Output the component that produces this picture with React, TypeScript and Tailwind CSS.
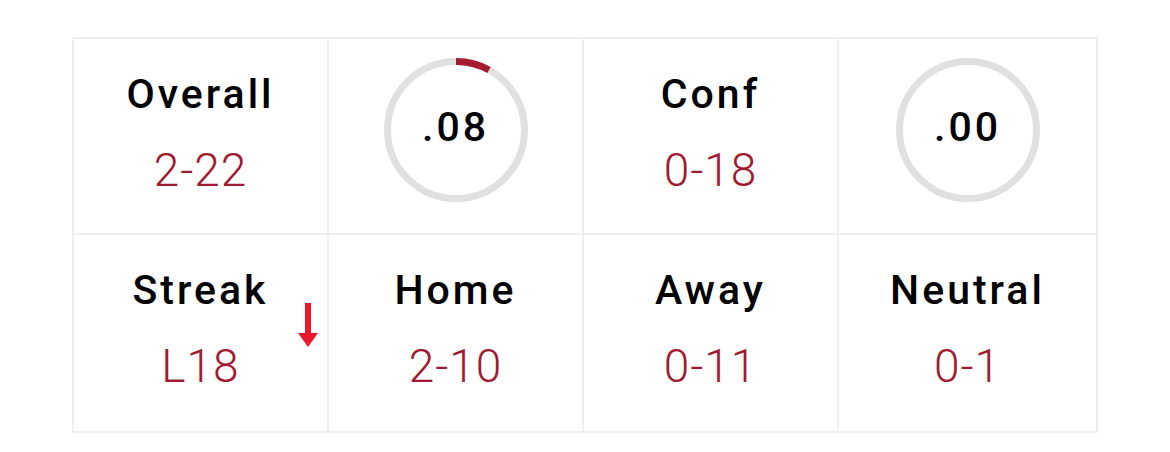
import React from "react";

const FONT = { fontFamily: "Roboto, 'Liberation Sans', sans-serif" };

function Stat({ label, value, arrow, tall }: { label: string; value: string; arrow?: boolean; tall?: boolean }) {
  return (
    <div
      className={`relative flex flex-col items-center gap-[32px] border-b-2 border-r-2 border-[#efefef] pt-[35px] ${
        tall ? "h-[198px]" : "h-[196px]"
      }`}
    >
      <div className="text-[41px] font-medium leading-none tracking-[3px] text-black">{label}</div>
      <div className="text-[46px] font-light leading-none tracking-[1px] text-[#a01a31]">{value}</div>
      {arrow && (
        <svg className="absolute left-[224px] top-[68px]" width="20" height="44" viewBox="0 0 20 44">
          <rect x="7" y="0" width="6" height="32" fill="#e8192c" />
          <polygon points="0,30 20,30 10,44" fill="#e8192c" />
        </svg>
      )}
    </div>
  );
}

function Ring({ value, frac }: { value: string; frac: number }) {
  const r = 68.5;
  const c = 2 * Math.PI * r;
  return (
    <div className="flex h-[196px] justify-center border-b-2 border-r-2 border-[#efefef] pt-[19px]">
      <div className="relative h-[144px] w-[144px]">
        <svg width="144" height="144" viewBox="0 0 144 144" className="absolute inset-0">
          <circle cx="72" cy="72" r={r} fill="none" stroke="#e0e0e0" strokeWidth="7" />
          {frac > 0 && (
            <circle
              cx="72"
              cy="72"
              r={r}
              fill="none"
              stroke="#a51c30"
              strokeWidth="7"
              strokeDasharray={`${c * frac} ${c}`}
              transform="rotate(-90 72 72)"
            />
          )}
        </svg>
        <div className="absolute inset-0 flex items-center justify-center pb-[6px]">
          <span className="text-[41px] font-medium leading-none tracking-[3px] text-black">{value}</span>
        </div>
      </div>
    </div>
  );
}

export default function App() {
  return (
    <div className="h-[452px] w-[1170px] bg-white pl-[72px] pt-[37px]" style={FONT}>
      <div className="grid w-[1026px] grid-cols-[255px_255px_255px_259px] border-l-2 border-t-2 border-[#efefef]">
        <Stat label="Overall" value="2-22" />
        <Ring value=".08" frac={0.08} />
        <Stat label="Conf" value="0-18" />
        <Ring value=".00" frac={0} />
        <Stat label="Streak" value="L18" arrow tall />
        <Stat label="Home" value="2-10" tall />
        <Stat label="Away" value="0-11" tall />
        <Stat label="Neutral" value="0-1" tall />
      </div>
    </div>
  );
}
